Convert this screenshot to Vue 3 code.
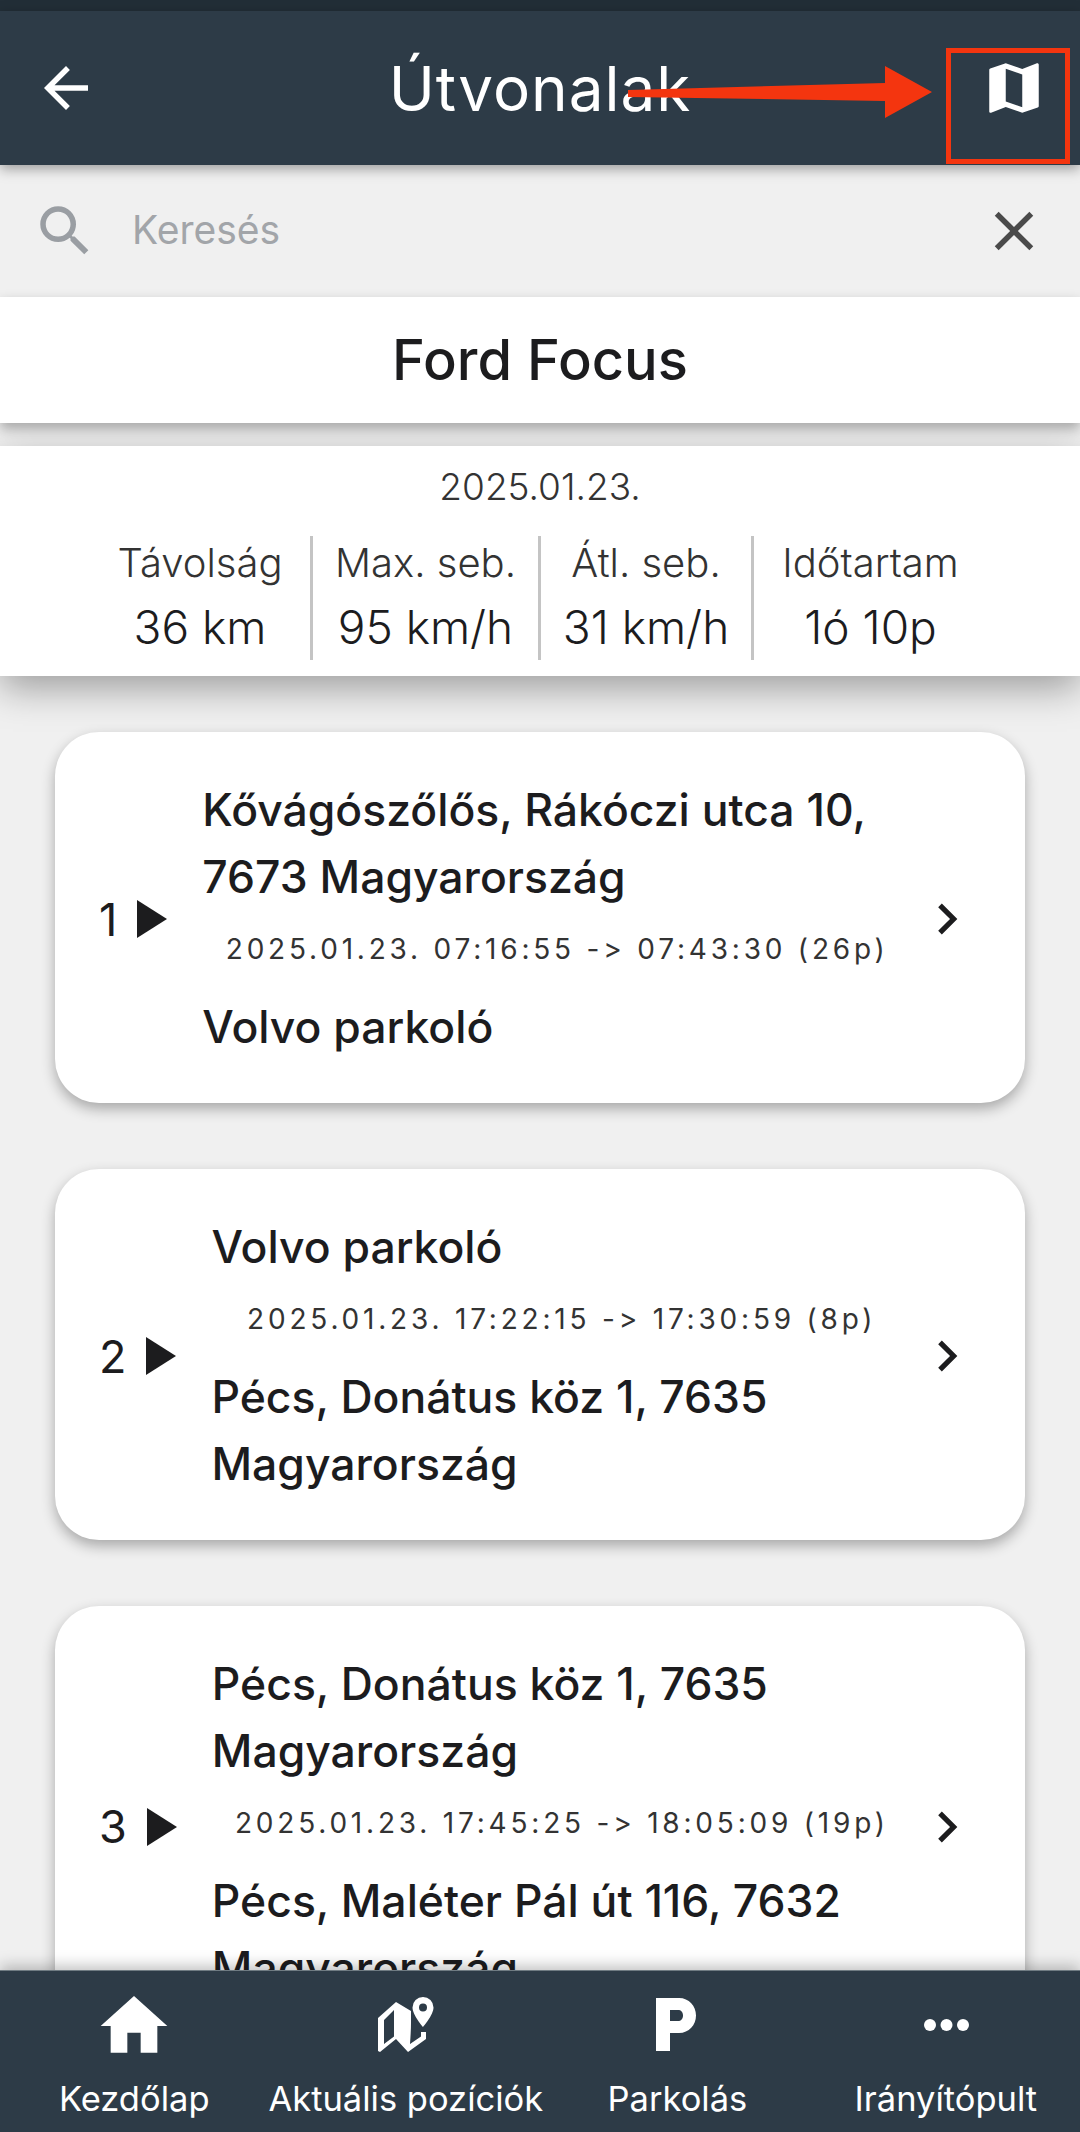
<template>
  <div class="screen">
    <div class="status"></div>
    <header class="top">
      <svg class="back" viewBox="0 0 24 24"><path d="M20 11H7.83l5.59-5.59L12 4l-8 8 8 8 1.41-1.41L7.83 13H20z" /></svg>
      <h1>Útvonalak</h1>
      <svg class="map" viewBox="0 0 24 24"><path d="M20.5 3l-.16.03L15 5.1 9 3 3.36 4.9c-.21.07-.36.25-.36.48V20.5c0 .28.22.5.5.5l.16-.03L9 18.9l6 2.1 5.64-1.9c.21-.07.36-.25.36-.48V3.5c0-.28-.22-.5-.5-.5zM15 19l-6-2.11V5l6 2.11V19z" /></svg>
      <div class="mark"></div>
      <svg class="arrow" viewBox="0 0 304 52"><path d="M0 24 L257 17 L257 0 L304 26 L257 52 L257 35 L0 31 Z" /></svg>
    </header>

    <div class="search">
      <svg class="lens" viewBox="0 0 24 24"><path d="M15.5 14h-.79l-.28-.27A6.47 6.47 0 0 0 16 9.5 6.5 6.5 0 1 0 9.5 16c1.61 0 3.09-.59 4.23-1.57l.27.28v.79l5 4.99L20.49 19l-4.99-5zm-6 0C7.01 14 5 11.99 5 9.5S7.01 5 9.5 5 14 7.01 14 9.5 11.99 14 9.5 14z" /></svg>
      <span class="placeholder">Keresés</span>
      <svg class="clear" viewBox="0 0 24 24"><path d="M19 6.41 17.59 5 12 10.59 6.41 5 5 6.41 10.59 12 5 17.59 6.41 19 12 13.41 17.59 19 19 17.59 13.41 12z" /></svg>
    </div>

    <div class="vehicle">Ford Focus</div>

    <section class="summary">
      <div class="date">2025.01.23.</div>
      <div class="stats">
        <div v-for="s in stats" :key="s.label" class="stat" :class="s.cls">
          <span class="label">{{ s.label }}</span>
          <span class="value">{{ s.value }}</span>
        </div>
      </div>
    </section>

    <main class="list">
      <article v-for="r in routes" :key="r.n" class="card">
        <div class="index">
          <span>{{ r.n }}</span>
          <svg viewBox="0 0 30 38"><path d="M0 0 L30 19 L0 38 Z" /></svg>
        </div>
        <div class="body">
          <p class="place" v-for="(line, i) in r.before" :key="i">{{ line }}</p>
          <p class="time">{{ r.time }}</p>
          <p class="place" v-for="(line, i) in r.after" :key="'a' + i">{{ line }}</p>
        </div>
        <svg class="chevron" viewBox="0 0 24 24"><path d="M10 6 8.59 7.41 13.17 12l-4.58 4.59L10 18l6-6z" /></svg>
      </article>
    </main>

    <nav class="bottom">
      <div class="tab">
        <svg viewBox="0 0 24 24"><path d="M10 20v-6h4v6h5v-8h3L12 3 2 12h3v8z" /></svg>
        <span>Kezdőlap</span>
      </div>
      <div class="tab">
        <svg viewBox="0 0 80 80" fill-rule="evenodd"><path d="M12 32 L30 16 L45 25 L45 37 Q45 44 44 58 L55 50.5 V46 H60 V53 L42 66 L30 53 L14 66 L12 65 Z M18 34 V58 L28 50.5 V24 Z" /><path d="M57 11 a10.5 10.5 0 0 1 10.5 10.5 C67.5 29 57 41 57 41 S46.5 29 46.5 21.5 A10.5 10.5 0 0 1 57 11 Z M57 17.5 a4 4 0 1 0 0 8 a4 4 0 0 0 0 -8 Z" /></svg>
        <span>Aktuális pozíciók</span>
      </div>
      <div class="tab">
        <svg viewBox="0 0 80 80" fill-rule="evenodd"><path d="M19 12 H42 C52 12 59 20 59 29.5 S52 47 42 47 H33 V65 H19 Z M33 24 V35 H41 C44 35 46 33 46 29.5 S44 24 41 24 Z" /></svg>
        <span>Parkolás</span>
      </div>
      <div class="tab">
        <svg viewBox="0 0 80 80"><circle cx="24" cy="39" r="6" /><circle cx="40.500" cy="39" r="6" /><circle cx="57" cy="39" r="6" /></svg>
        <span>Irányítópult</span>
      </div>
    </nav>
  </div>
</template>

<script setup>
const stats = [
  { label: 'Távolság', value: '36 km', cls: 's1' },
  { label: 'Max. seb.', value: '95 km/h', cls: 's2' },
  { label: 'Átl. seb.', value: '31 km/h', cls: 's3' },
  { label: 'Időtartam', value: '1ó 10p', cls: 's4' }
]

const routes = [
  {
    n: 1,
    before: ['Kővágószőlős, Rákóczi utca 10,', '7673 Magyarország'],
    time: '2025.01.23. 07:16:55 -> 07:43:30 (26p)',
    after: ['Volvo parkoló']
  },
  {
    n: 2,
    before: ['Volvo parkoló'],
    time: '2025.01.23. 17:22:15 -> 17:30:59 (8p)',
    after: ['Pécs, Donátus köz 1, 7635', 'Magyarország']
  },
  {
    n: 3,
    before: ['Pécs, Donátus köz 1, 7635', 'Magyarország'],
    time: '2025.01.23. 17:45:25 -> 18:05:09 (19p)',
    after: ['Pécs, Maléter Pál út 116, 7632', 'Magyarország']
  }
]
</script>

<style scoped>
.screen {
  width: 1080px;
  height: 2132px;
  display: flex;
  flex-direction: column;
  overflow: hidden;
  background: #f0f0f0;
  font-family: Inter, "Open Sans", sans-serif;
  color: #1c1c1e;
}

.status {
  height: 11px;
  flex: none;
  background: #222e37;
}

.top {
  position: relative;
  z-index: 3;
  height: 154px;
  flex: none;
  background: #2d3b47;
  box-shadow: 0 4px 12px rgba(0, 0, 0, 0.35);
  display: flex;
  align-items: center;
  justify-content: space-between;
  padding: 0 33px 0 33px;
}

.top h1 {
  margin: 0;
  font-size: 62px;
  font-weight: 400;
  letter-spacing: 1px;
  color: #fff;
}

.back,
.map {
  width: 66px;
  height: 66px;
  fill: #fff;
  flex: none;
}

.mark {
  position: absolute;
  left: 946px;
  top: 37px;
  width: 124px;
  height: 116px;
  box-sizing: border-box;
  border: 5px solid #f4350f;
}

.arrow {
  position: absolute;
  left: 628px;
  top: 55px;
  width: 304px;
  height: 52px;
  fill: #f4350f;
}

.search {
  height: 132px;
  flex: none;
  display: flex;
  align-items: center;
  padding: 0 33px 0 32px;
}

.lens {
  width: 66px;
  height: 66px;
  fill: #9a9ea3;
  flex: none;
}

.placeholder {
  margin-left: 34px;
  padding-bottom: 4px;
  flex: 1;
  font-size: 39px;
  color: #a2a5a9;
}

.clear {
  width: 66px;
  height: 66px;
  fill: #4a4a4a;
  flex: none;
}

.vehicle {
  position: relative;
  z-index: 2;
  height: 126px;
  flex: none;
  background: #fff;
  box-shadow: 0 6px 12px rgba(0, 0, 0, 0.3);
  display: flex;
  align-items: center;
  justify-content: center;
  font-size: 56px;
  font-weight: 500;
}

.summary {
  position: relative;
  z-index: 1;
  height: 230px;
  flex: none;
  margin-top: 23px;
  background: #fff;
  box-shadow: 0 12px 36px rgba(0, 0, 0, 0.35);
  display: flex;
  flex-direction: column;
}

.date {
  text-align: center;
  font-size: 37px;
  line-height: 46px;
  margin-top: 18px;
  color: #333;
  font-weight: 300;
}

.stats {
  display: flex;
  margin-top: 26px;
  padding-left: 90px;
}

.stat {
  height: 124px;
  box-sizing: border-box;
  display: flex;
  flex-direction: column;
  align-items: center;
  border-left: 3px solid #c4c4c4;
}

.s1 {
  width: 220px;
  border-left: none;
}

.s2 {
  width: 228px;
}

.s3 {
  width: 213px;
}

.s4 {
  width: 236px;
}

.label {
  font-size: 40px;
  line-height: 44px;
  margin-top: 5px;
  color: #333;
  font-weight: 300;
}

.value {
  font-size: 46px;
  line-height: 52px;
  margin-top: 16px;
  font-weight: 300;
}

.list {
  flex: 1;
  min-height: 0;
  overflow: hidden;
  padding: 56px 55px 0;
  display: flex;
  flex-direction: column;
  gap: 66px;
}

.card {
  flex: none;
  background: #fff;
  border-radius: 44px;
  box-shadow: 0 6px 14px rgba(0, 0, 0, 0.3);
  display: flex;
  align-items: center;
  padding: 45px 47px 42px 44px;
}

.index {
  display: flex;
  align-items: center;
  gap: 20px;
  font-size: 45px;
  font-weight: 400;
  flex: none;
}

.index svg {
  width: 30px;
  height: 38px;
  fill: #1c1c1e;
}

.body {
  flex: 1;
  margin-left: 35px;
  min-width: 0;
}

.place {
  margin: 0;
  font-size: 44.5px;
  line-height: 67px;
  font-weight: 500;
  white-space: nowrap;
}

.time {
  margin: 18px 0 25px;
  text-align: center;
  font-size: 28px;
  line-height: 40px;
  letter-spacing: 3.8px;
  color: #333;
  white-space: nowrap;
}

.chevron {
  width: 62px;
  height: 62px;
  margin-left: 4px;
  fill: #1c1c1e;
  flex: none;
}

.bottom {
  position: relative;
  z-index: 4;
  height: 162px;
  flex: none;
  background: #2d3b47;
  border-top: 1px solid #6f7b82;
  box-shadow: 0 -4px 14px rgba(0, 0, 0, 0.25);
  box-sizing: border-box;
  color: #fff;
  display: grid;
  grid-template-columns: repeat(4, 1fr);
}

.tab {
  display: flex;
  flex-direction: column;
  align-items: center;
  padding-top: 15px;
  font-size: 34.5px;
  white-space: nowrap;
}

.tab svg {
  width: 80px;
  height: 80px;
  fill: #fff;
}

.tab span {
  margin-top: 11px;
  line-height: 44px;
}
</style>

<style>
html,
body {
  margin: 0;
  background: #f0f0f0;
}
</style>
